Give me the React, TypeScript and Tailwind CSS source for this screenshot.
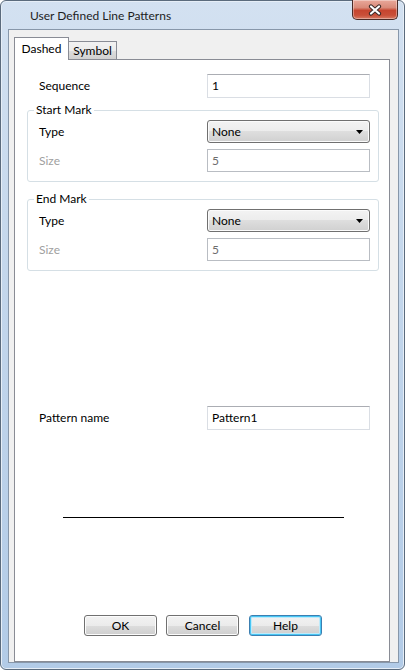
import React from "react";

function TextBox({ value, disabled, h }: { value: string; disabled?: boolean; h: string }) {
  return (
    <div
      className={`w-[163px] ${h} flex items-center pl-[4px] bg-white border ${
        disabled
          ? "border-[#b9bdc3] text-[#6d6d6d]"
          : "border-[#dadee4] border-t-[#abadb3] text-black"
      }`}
    >
      {value}
    </div>
  );
}

function Combo({ value }: { value: string }) {
  return (
    <div className="w-[163px] h-[23px] flex items-center pl-[4px] pr-[6px] border border-[#707070] rounded-[3px] bg-[linear-gradient(#f3f3f3,#ececec_50%,#dedede_50%,#d0d0d0)] shadow-[inset_0_0_0_1px_#fbfbfb]">
      <span className="flex-1">{value}</span>
      <svg width="7" height="4" viewBox="0 0 7 4">
        <path d="M0 0 H7 L3.5 4 Z" fill="#000" />
      </svg>
    </div>
  );
}

function Group({ title }: { title: string }) {
  return (
    <fieldset className="ml-[12px] w-[352px] border border-[#d5dfe5] rounded-[3px] px-0 pb-[9px] m-0">
      <legend className="ml-[6px] px-[2px] leading-[16px]">{title}</legend>
      <div className="mt-[2px] flex items-center h-[23px]">
        <span className="w-[179px] pl-[11px]">Type</span>
        <Combo value="None" />
      </div>
      <div className="mt-[6px] flex items-center h-[23px]">
        <span className="w-[179px] pl-[11px] text-[#a0a0a0]">Size</span>
        <TextBox value="5" disabled h="h-[23px]" />
      </div>
    </fieldset>
  );
}

function Btn({ label, def, cls }: { label: string; def?: boolean; cls?: string }) {
  return (
    <div
      className={`w-[73px] h-[21px] flex items-center justify-center rounded-[3px] border bg-[linear-gradient(#f2f2f2,#ebebeb_50%,#dddddd_50%,#cfcfcf)] ${
        def
          ? "border-[#3c7fb1] shadow-[inset_0_0_0_1px_#48c6f4,inset_0_0_0_2px_#bfeafa]"
          : "border-[#707070] shadow-[inset_0_0_0_1px_#fcfcfc]"
      } ${cls ?? ""}`}
    >
      {label}
    </div>
  );
}

export default function App() {
  return (
    <div className="w-[405px] h-[670px] bg-white font-['Lato',sans-serif] text-[12px] leading-[16px] text-black">
      <div className="w-[405px] h-[670px] rounded-[6px] border border-[#5b6b7d] bg-[linear-gradient(180deg,#d3e1f1_0%,#c4d7ec_40%,#b2cbe7_100%)] shadow-[inset_0_0_0_1px_#e6eef7] flex flex-col pl-[7px] pr-[5px] pb-[6px]">
        {/* title bar */}
        <div className="h-[28px] flex items-start">
          <span className="ml-[22px] mt-[7px] text-[#1e1e1e]">User Defined Line Patterns</span>
          <div className="ml-auto mr-[1px] -mt-px w-[46px] h-[20px] rounded-b-[5px] border border-t-0 border-[#4a2b27] bg-[linear-gradient(180deg,#e9a89a_0%,#d98a79_40%,#c6452f_55%,#c94f38_80%,#d77a63_100%)] shadow-[inset_0_0_0_1px_rgba(255,255,255,0.35)] flex items-center justify-center">
            <svg width="16" height="12" viewBox="0 0 16 12">
              <path d="M4 2.5 L12 9.5 M12 2.5 L4 9.5" stroke="#3a2a28" strokeWidth="4.2" strokeLinecap="round" />
              <path d="M4 2.5 L12 9.5 M12 2.5 L4 9.5" stroke="#ffffff" strokeWidth="2.2" strokeLinecap="round" />
            </svg>
          </div>
        </div>
        {/* client area */}
        <div className="flex-1 border border-[#8797aa] bg-[#f0f0f0] flex flex-col pl-[5px] pr-[8px] pt-[7px]">
          {/* tabs */}
          <div className="h-[23px] -mb-px flex items-end">
            <div className="relative z-10 w-[55px] h-[23px] bg-white border border-b-0 border-[#898c95] flex items-start justify-center pt-[3px]">
              Dashed
            </div>
            <div className="w-[48px] h-[19px] border border-l-0 border-b-0 border-[#898c95] bg-[linear-gradient(#f2f2f2,#ebebeb_50%,#dddddd_50%,#cfcfcf)] flex items-start justify-center pt-[1px]">
              Symbol
            </div>
          </div>
          {/* tab panel */}
          <div className="flex-1 w-[376px] border border-[#898c95] bg-white flex flex-col">
            <div className="mt-[14px] flex items-center h-[24px]">
              <span className="w-[192px] pl-[24px]">Sequence</span>
              <TextBox value="1" h="h-[24px]" />
            </div>
            <div className="mt-[4px]">
              <Group title="Start Mark" />
            </div>
            <div className="mt-[9px]">
              <Group title="End Mark" />
            </div>
            <div className="mt-[135px] flex items-center h-[24px]">
              <span className="w-[192px] pl-[24px]">Pattern name</span>
              <TextBox value="Pattern1" h="h-[24px]" />
            </div>
            <div className="mt-[87px] ml-[48px] w-[281px] h-px bg-black" />
            <div className="mt-[97px] ml-[69px] flex">
              <Btn label="OK" />
              <Btn label="Cancel" cls="ml-[9px]" />
              <Btn label="Help" def cls="ml-[10px]" />
            </div>
          </div>
        </div>
      </div>
    </div>
  );
}
